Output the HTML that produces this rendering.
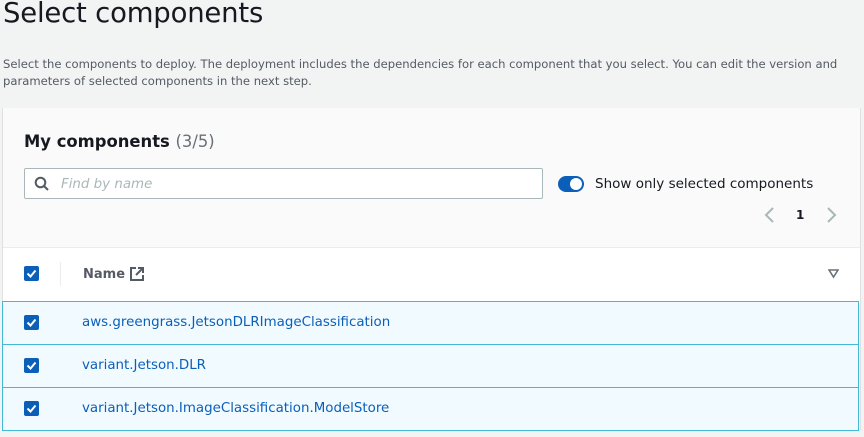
<!DOCTYPE html>
<html><head><style>
body{margin:0;width:864px;height:437px;background:#f2f3f3;font-family:"DejaVu Sans","Liberation Sans",sans-serif;overflow:hidden;position:relative;color:#16191f}
.abs{position:absolute}
h1{position:absolute;left:3px;top:-3px;margin:0;font-weight:400;font-size:27.5px;letter-spacing:-0.2px}
.desc{left:3px;top:56px;font-size:11.6px;line-height:17px;color:#545b64;width:855px}
.panel{left:2px;top:108px;width:857px;height:322px;background:#fafafa;border-left:1px solid #e0e0e0;border-right:1px solid #e0e0e0}
.cb{position:absolute;width:15px;height:15px;background:#0b5fb8;border-radius:2px}
.cb svg{position:absolute;left:2px;top:2px}
.row{position:absolute;left:2px;width:855px;height:42px;background:#f1faff;border:1px solid #44b9d6}
.row a{position:absolute;left:79px;top:13px;font-size:13.4px;color:#0b5fb8}
.row .cb{left:21px;top:13px}
</style></head><body>
<h1>Select components</h1>
<div class="abs desc">Select the components to deploy. The deployment includes the dependencies for each component that you select. You can edit the version and parameters of selected components in the next step.</div>
<div class="abs panel"></div>
<div class="abs" style="left:24px;top:132px;font-size:16.4px;font-weight:bold">My components <span style="font-weight:400;color:#687078">(3/5)</span></div>
<div class="abs" style="left:24px;top:168px;width:517px;height:29px;border:1px solid #aab7b8;border-radius:2px;background:#fff"></div>
<svg class="abs" style="left:34px;top:176px" width="16" height="16" viewBox="0 0 16 16"><circle cx="6.5" cy="6.5" r="4.8" fill="none" stroke="#545b64" stroke-width="2"/><path d="M10 10l4 4" stroke="#545b64" stroke-width="2"/></svg>
<div class="abs" style="left:61px;top:177px;font-size:13.4px;font-style:italic;color:#aab7b8">Find by name</div>
<div class="abs" style="left:558px;top:176px;width:26px;height:16px;border-radius:8px;background:#0b5fb8"></div>
<div class="abs" style="left:570px;top:178px;width:12px;height:12px;border-radius:6px;background:#fff"></div>
<div class="abs" style="left:595px;top:176px;font-size:13.5px;color:#16191f">Show only selected components</div>
<svg class="abs" style="left:763px;top:207px" width="12" height="16"><path d="M10 1L3 8l7 7" fill="none" stroke="#aab7b8" stroke-width="2"/></svg>
<div class="abs" style="left:796px;top:208px;font-size:12px;font-weight:bold">1</div>
<svg class="abs" style="left:826px;top:207px" width="12" height="16"><path d="M2 1l7 7-7 7" fill="none" stroke="#aab7b8" stroke-width="2"/></svg>
<div class="abs" style="left:3px;top:247px;width:857px;height:54px;background:#fff;border-top:1px solid #eaeded"></div>
<div class="cb" style="left:24px;top:266px"><svg width="11" height="11"><path d="M1.5 5.5l3 3 5-6" fill="none" stroke="#fff" stroke-width="2"/></svg></div>
<div class="abs" style="left:60px;top:262px;width:1px;height:24px;background:#eaeded"></div>
<div class="abs" style="left:83px;top:267px;font-size:13px;font-weight:bold;color:#545b64">Name</div>
<svg class="abs" style="left:129px;top:266px" width="16" height="16"><path d="M7 2H2v12h12V9" fill="none" stroke="#545b64" stroke-width="2"/><path d="M9 2h5v5M14 2L7 9" fill="none" stroke="#545b64" stroke-width="2"/></svg>
<svg class="abs" style="left:828px;top:269px" width="11" height="10"><path d="M1 1h9L5.5 8z" fill="none" stroke="#687078" stroke-width="1.6"/></svg>
<div class="row" style="top:301px"><div class="cb"><svg width="11" height="11"><path d="M1.5 5.5l3 3 5-6" fill="none" stroke="#fff" stroke-width="2"/></svg></div><a>aws.greengrass.JetsonDLRImageClassification</a></div>
<div class="row" style="top:344px"><div class="cb"><svg width="11" height="11"><path d="M1.5 5.5l3 3 5-6" fill="none" stroke="#fff" stroke-width="2"/></svg></div><a>variant.Jetson.DLR</a></div>
<div class="row" style="top:387px"><div class="cb"><svg width="11" height="11"><path d="M1.5 5.5l3 3 5-6" fill="none" stroke="#fff" stroke-width="2"/></svg></div><a>variant.Jetson.ImageClassification.ModelStore</a></div>
</body></html>
